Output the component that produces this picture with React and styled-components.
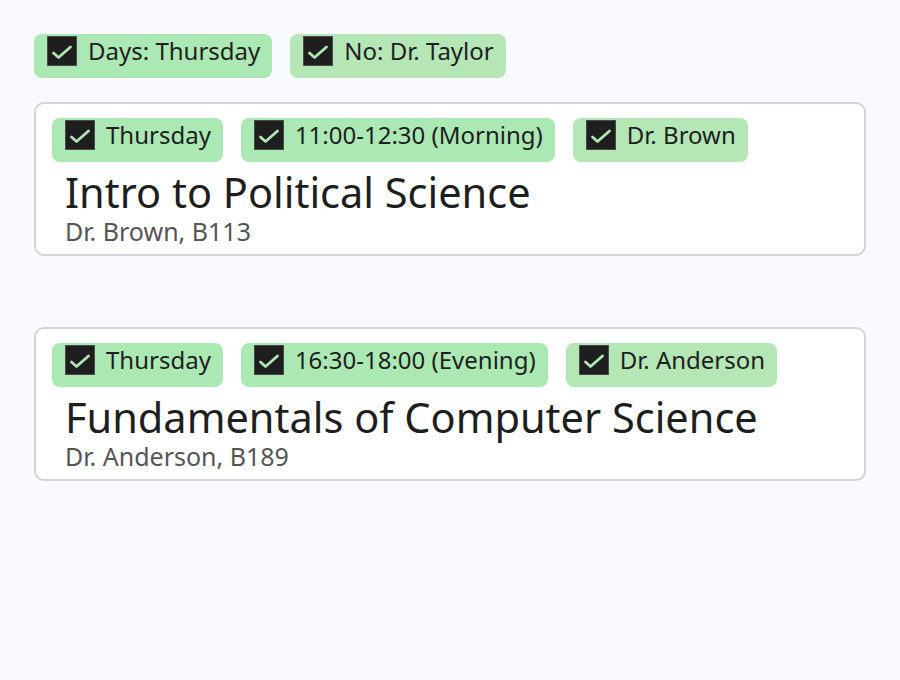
import React from 'react';
import styled, { createGlobalStyle } from 'styled-components';

const filters = [
    { label: 'Days: Thursday', tone: 'a' },
    { label: 'No: Dr. Taylor', tone: 'b' },
];

const courses = [
    {
        title: 'Intro to Political Science',
        info: 'Dr. Brown, B113',
        tags: [
            { label: 'Thursday', tone: 'a' },
            { label: '11:00-12:30 (Morning)', tone: 'a' },
            { label: 'Dr. Brown', tone: 'b' },
        ],
    },
    {
        title: 'Fundamentals of Computer Science',
        info: 'Dr. Anderson, B189',
        tags: [
            { label: 'Thursday', tone: 'a' },
            { label: '16:30-18:00 (Evening)', tone: 'a' },
            { label: 'Dr. Anderson', tone: 'b' },
        ],
    },
];

const Check = () => (
    <Box>
        <svg width="24" height="24" viewBox="0 0 24 24" fill="none" stroke="#b3e6b5" strokeWidth="2.8" strokeLinecap="round" strokeLinejoin="round">
            <path d="M3.5 14l5 4.5L20.5 8" />
        </svg>
    </Box>
);

const Chip = ({ label, tone }) => (
    <ChipWrapper $tone={tone}>
        <Check />
        <span>{label}</span>
    </ChipWrapper>
);

const App = () => {
    return (
        <>
            <GlobalStyle />
            <Page>
                <ChipRow>
                    {filters.map(f => <Chip key={f.label} {...f} />)}
                </ChipRow>

                {courses.map(course => (
                    <Card key={course.title}>
                        <ChipRow>
                            {course.tags.map(t => <Chip key={t.label} {...t} />)}
                        </ChipRow>
                        <Title>{course.title}</Title>
                        <Info>{course.info}</Info>
                    </Card>
                ))}
            </Page>
        </>
    );
};

export default App;


const GlobalStyle = createGlobalStyle`
    html, body {
        margin: 0;
        padding: 0;
        background: #f9faff;
    }

    body {
        font-family: 'Noto Sans', 'Open Sans', sans-serif;
        color: #1e1e1e;
        width: 900px;
        height: 680px;
    }
`

const Page = styled.main`
    display: flex;
    flex-direction: column;
    padding: 34px 34px 0 34px;
    gap: 24px;

    & > section + section {
        margin-top: 47px;
    }
`

const ChipRow = styled.div`
    display: flex;
    gap: 18px;
`

const ChipWrapper = styled.div`
    display: flex;
    align-items: flex-start;
    height: 44px;
    box-sizing: border-box;
    padding: 2px 12px 0 13px;
    gap: 11px;
    border-radius: 8px;
    background: ${p => p.$tone === 'b' ? '#b4e6b6' : '#abe8b3'};

    span {
        font-size: 24px;
        line-height: 30px;
        white-space: nowrap;
    }
`

const Box = styled.div`
    display: flex;
    align-items: center;
    justify-content: center;
    width: 30px;
    height: 30px;
    box-sizing: border-box;
    background: #1e1e1e;
    border: 1px solid #4a4a4a;
    overflow: hidden;
`

const Card = styled.section`
    display: flex;
    flex-direction: column;
    height: 154px;
    box-sizing: border-box;
    padding: 14px 16px 0 16px;
    background: #ffffff;
    border: 2px solid #d3d3d8;
    border-radius: 10px;
`

const Title = styled.h2`
    margin: 8px 0 0 13px;
    font-size: 41.5px;
    font-weight: 400;
    line-height: 44px;
`

const Info = styled.p`
    margin: 2px 0 0 13px;
    font-size: 25px;
    line-height: 30px;
    color: #555555;
`
